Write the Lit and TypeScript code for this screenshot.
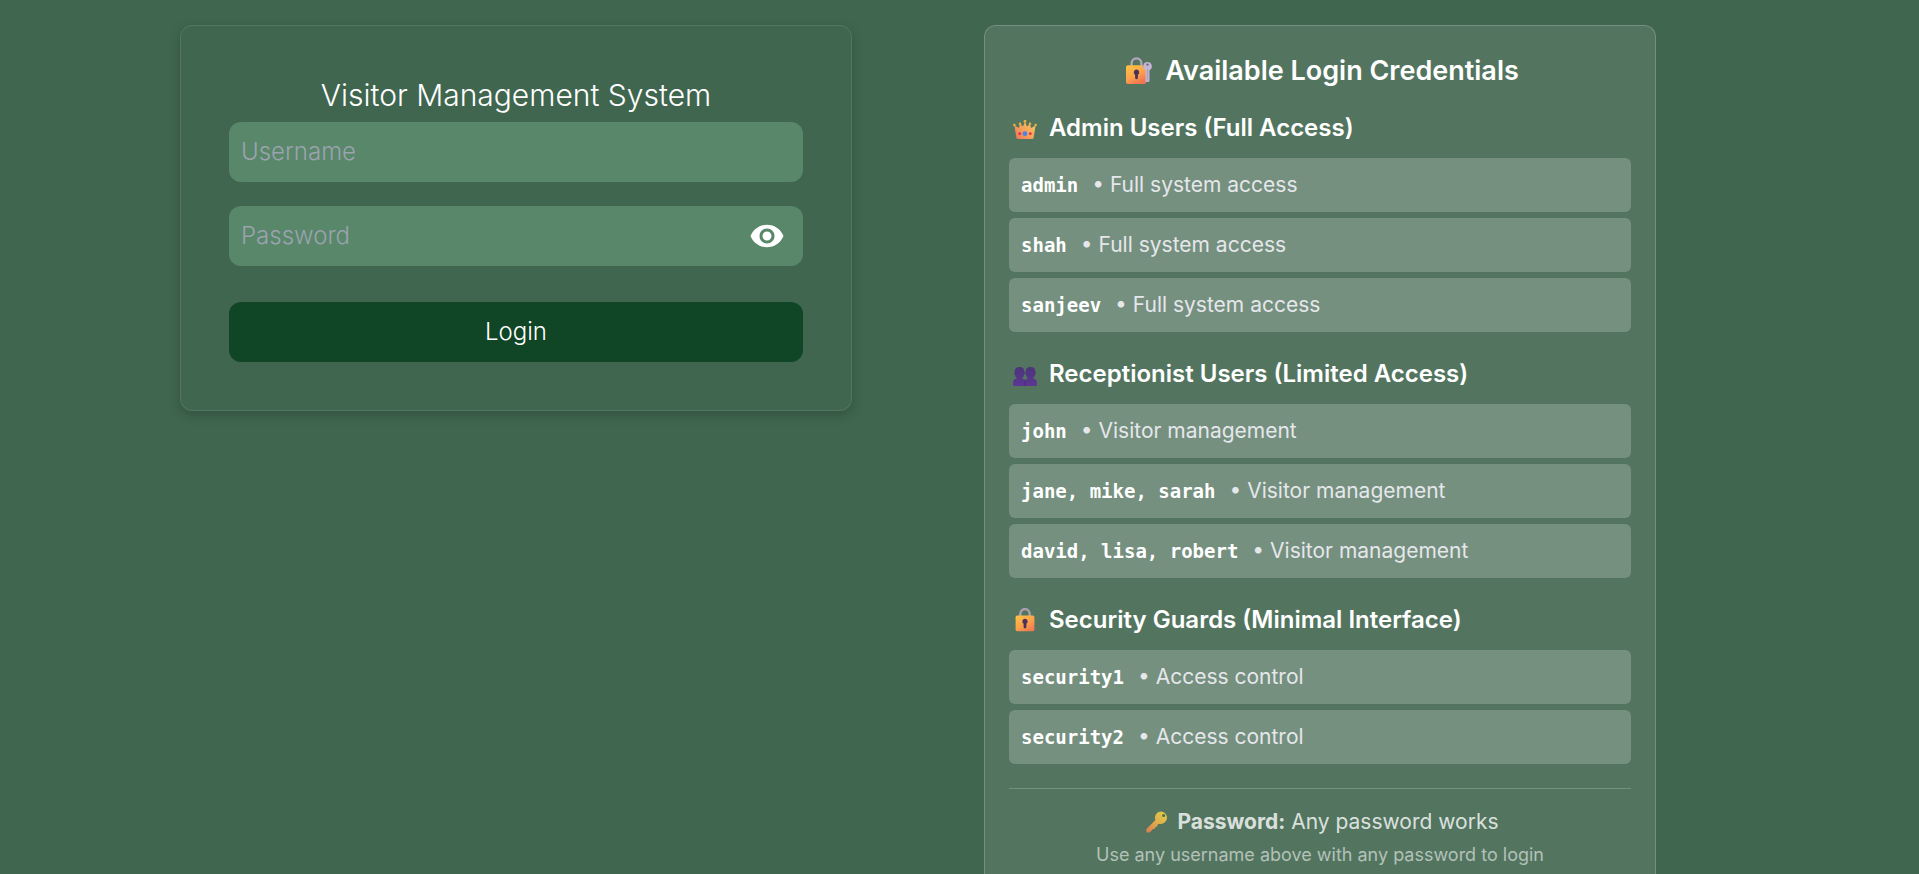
import { LitElement, html, css, svg } from "lit";
import { customElement, state } from "lit/decorators.js";

const padlock = svg`
  <defs>
    <linearGradient id="body" x1="0" y1="0" x2="0.7" y2="1">
      <stop offset="0" stop-color="#fdc546" />
      <stop offset="0.6" stop-color="#fba049" />
      <stop offset="1" stop-color="#f27c50" />
    </linearGradient>
  </defs>
  <path d="M7.3 9V5.800a4.700 4.700 0 0 1 9.400 0V9" fill="none" stroke="#a8a0ae" stroke-width="2.400" />
  <rect x="2.600" y="7.600" width="18.800" height="15.600" rx="1.600" fill="url(#body)" />
  <path d="M12 10.800a2.700 2.700 0 0 1 1.400 5v3.300a1.400 1.400 0 0 1-2.800 0v-3.300a2.700 2.700 0 0 1 1.400-5z" fill="#49325c" />
`;

const icons = {
  lockKey: html`<svg class="emoji large" viewBox="0 0 28 28" aria-hidden="true">
    <defs>
      <linearGradient id="lk" x1="0" y1="0" x2="0.6" y2="1">
        <stop offset="0" stop-color="#fdc744" />
        <stop offset="0.6" stop-color="#fba24a" />
        <stop offset="1" stop-color="#f07553" />
      </linearGradient>
    </defs>
    <path d="M6.6 10V6.2a4.9 4.9 0 0 1 9.8 0V10" fill="none" stroke="#b3a7bd" stroke-width="2.2" />
    <path d="M3 8.3h14.6c.3 2 1.4 3.3 3.6 4.1V25a2 2 0 0 1-2 2H3a2 2 0 0 1-2-2V10.300a2 2 0 0 1 2-2z" fill="url(#lk)" />
    <path d="M11.500 12.600a2.800 2.800 0 0 1 1.400 5.200v3a1.400 1.400 0 0 1-2.800 0v-3a2.800 2.800 0 0 1 1.400-5.200z" fill="#4b3158" />
    <path d="M22.500 5a4.400 4.400 0 0 1 2 8.300v10.200a1.600 1.600 0 0 1-1.600 1.600h-1.500a.9.900 0 0 1-.9-.9V13.300A4.400 4.400 0 0 1 22.500 5z" fill="#c4b6d2" />
    <circle cx="22.500" cy="7.600" r="1.100" fill="#66577a" />
    <path d="M22.600 12v11.500" stroke="#a695b8" stroke-width="0.8" />
  </svg>`,
  crown: html`<svg class="emoji" viewBox="0 0 24 24" aria-hidden="true">
    <defs>
      <linearGradient id="cr" x1="0" y1="1" x2="1" y2="0.2">
        <stop offset="0" stop-color="#e8735a" />
        <stop offset="0.5" stop-color="#f5a05c" />
        <stop offset="1" stop-color="#fcc35c" />
      </linearGradient>
    </defs>
    <path d="M1.400 9.500l4.600 2.500 1-4 3 2.600 2-5 2 5 3-2.600 1 4 4.600-2.500-2 12.300a1.500 1.500 0 0 1-1.500 1.200H4.900a1.500 1.500 0 0 1-1.500-1.200z" fill="url(#cr)" />
    <g fill="#f0b33c">
      <circle cx="1.400" cy="9" r="1.300" /><circle cx="7" cy="7.800" r="1.300" />
      <circle cx="12" cy="5.300" r="1.400" />
      <circle cx="17" cy="7.800" r="1.300" /><circle cx="22.600" cy="9" r="1.300" />
    </g>
    <circle cx="12" cy="17.700" r="2.400" fill="#4a83ea" />
    <circle cx="6.700" cy="17.700" r="1.400" fill="#e2304f" />
    <circle cx="17.300" cy="17.700" r="1.400" fill="#e2304f" />
  </svg>`,
  people: html`<svg class="emoji" viewBox="0 0 24 24" aria-hidden="true">
    <defs>
      <linearGradient id="pp" x1="0" y1="0" x2="0" y2="1">
        <stop offset="0" stop-color="#4b3578" />
        <stop offset="1" stop-color="#5c3794" />
      </linearGradient>
    </defs>
    <g fill="url(#pp)">
      <path d="M6.500 5c3.400 0 4.900 1.700 4.900 4.700.7.200.7 2.400-.2 2.700-.3 1.500-.9 2.600-1.900 3.400v.7c2 .4 3 1.700 3 3.700v2.900a.8.800 0 0 1-.8.800H.9a.8.800 0 0 1-.8-.8v-2.900c0-2 1.300-3.300 3.600-3.700v-.7c-1-.8-1.600-1.900-1.900-3.400-.9-.3-.9-2.500-.2-2.700C1.600 6.700 3.100 5 6.500 5z" />
      <path d="M17.500 5c3.400 0 4.900 1.700 4.900 4.700.7.200.7 2.400-.2 2.700-.3 1.500-.9 2.600-1.900 3.400v.7c2.300.4 3.600 1.700 3.600 3.700v2.900a.8.800 0 0 1-.8.800H12.500a.8.800 0 0 1-.8-.8v-2.900c0-2 1-3.300 3-3.700v-.7c-1-.8-1.600-1.900-1.900-3.400-.9-.3-.9-2.500-.2-2.700 0-3 1.500-4.700 4.900-4.700z" />
    </g>
    <path d="M12 18.500v5" stroke="#432a70" stroke-width="0.700" />
  </svg>`,
  lock: html`<svg class="emoji" viewBox="0 0 24 24" aria-hidden="true">${padlock}</svg>`,
  key: html`<svg class="emoji small" viewBox="0 0 22 22" aria-hidden="true">
    <defs>
      <linearGradient id="ky" x1="1" y1="0" x2="0" y2="1">
        <stop offset="0" stop-color="#e0cf4a" />
        <stop offset="0.5" stop-color="#e0ae4c" />
        <stop offset="1" stop-color="#dc7a52" />
      </linearGradient>
    </defs>
    <path d="M15.200.4a6.300 6.300 0 1 1-2.400 12.300l-1.300 1.100-.3 1.800-1.900.3-.4 1.900-1.800.3-3.300 3.100a1.500 1.500 0 0 1-1.300.4l-1.300-.2a.9.900 0 0 1-.8-.8l-.1-1.800a1.500 1.500 0 0 1 .4-1.100L9.400 9A6.300 6.300 0 0 1 15.200.4z" fill="url(#ky)" />
    <circle cx="17.600" cy="4.400" r="1.500" fill="#4f6b45" />
  </svg>`,
};

const groups = [
  {
    icon: icons.crown,
    title: "Admin Users (Full Access)",
    rows: [
      ["admin", "Full system access"],
      ["shah", "Full system access"],
      ["sanjeev", "Full system access"],
    ],
  },
  {
    icon: icons.people,
    title: "Receptionist Users (Limited Access)",
    rows: [
      ["john", "Visitor management"],
      ["jane, mike, sarah", "Visitor management"],
      ["david, lisa, robert", "Visitor management"],
    ],
  },
  {
    icon: icons.lock,
    title: "Security Guards (Minimal Interface)",
    rows: [
      ["security1", "Access control"],
      ["security2", "Access control"],
    ],
  },
];

@customElement("login-form")
export class LoginForm extends LitElement {
  @state() private visible = false;

  static styles = css`
    :host {
      display: block;
    }
    * {
      box-sizing: border-box;
    }
    .card {
      display: flex;
      flex-direction: column;
      padding: 48px;
      border: 1px solid rgba(255, 255, 255, 0.1);
      border-radius: 12px;
      box-shadow: 0 4px 12px rgba(0, 0, 0, 0.2);
    }
    h1 {
      margin: 0 0 6px;
      font-size: 30px;
      line-height: 42px;
      font-weight: 300;
      text-align: center;
    }
    .field {
      display: flex;
      align-items: center;
      height: 60px;
      margin-bottom: 24px;
      background: #58876a;
      border-radius: 12px;
    }
    input {
      flex: 1;
      min-width: 0;
      height: 100%;
      padding: 0 12px 2px;
      border: 0;
      border-radius: 12px;
      background: transparent;
      color: #fff;
      font: inherit;
    }
    input::placeholder {
      color: #9ca3af;
      opacity: 1;
    }
    .toggle {
      display: flex;
      margin-right: 18px;
      padding: 0;
      border: 0;
      background: none;
      color: #fff;
      cursor: pointer;
    }
    .toggle svg {
      width: 36px;
      height: 36px;
      fill: currentColor;
    }
    .submit {
      height: 60px;
      margin-top: 12px;
      border: 0;
      border-radius: 12px;
      background: #104526;
      color: #fff;
      font: inherit;
      cursor: pointer;
    }
  `;

  render() {
    return html`
      <form class="card" @submit=${(e: Event) => e.preventDefault()}>
        <h1>Visitor Management System</h1>
        <div class="field">
          <input type="text" aria-label="Username" placeholder="Username" />
        </div>
        <div class="field">
          <input type=${this.visible ? "text" : "password"} aria-label="Password" placeholder="Password" />
          <button class="toggle" type="button" aria-label="Show password"
            @click=${() => (this.visible = !this.visible)}>
            <svg viewBox="0 0 24 24" aria-hidden="true">
              <path d="M12 4.500C7 4.500 2.730 7.610 1 12c1.730 4.390 6 7.500 11 7.500s9.270-3.110 11-7.500c-1.730-4.390-6-7.500-11-7.500zM12 17c-2.760 0-5-2.240-5-5s2.240-5 5-5 5 2.240 5 5-2.240 5-5 5zm0-8c-1.660 0-3 1.340-3 3s1.340 3 3 3 3-1.340 3-3-1.340-3-3-3z" />
            </svg>
          </button>
        </div>
        <button class="submit" type="submit">Login</button>
      </form>
    `;
  }
}

@customElement("credential-list")
export class CredentialList extends LitElement {
  static styles = css`
    :host {
      display: block;
    }
    .card {
      padding: 24px;
      border: 1px solid rgba(255, 255, 255, 0.2);
      border-radius: 12px;
      background: rgba(255, 255, 255, 0.1);
      font-weight: 400;
    }
    h2,
    h3,
    p,
    ul {
      margin: 0;
      padding: 0;
    }
    h2,
    h3,
    .password {
      display: flex;
      align-items: center;
    }
    h2 {
      justify-content: center;
      margin-bottom: 18px;
      font-size: 27px;
      line-height: 42px;
      font-weight: 600;
    }
    h3 {
      margin-bottom: 12px;
      font-size: 24px;
      line-height: 36px;
      font-weight: 600;
    }
    .emoji {
      flex: none;
      width: 24px;
      height: 24px;
      margin: 0 12px 0 4px;
    }
    .large {
      width: 28px;
      height: 28px;
    }
    .small {
      width: 22px;
      height: 22px;
      margin-right: 10px;
    }
    .group {
      margin-bottom: 24px;
    }
    ul {
      display: grid;
      gap: 6px;
      list-style: none;
    }
    li {
      padding: 12px;
      border-radius: 6px;
      background: rgba(255, 255, 255, 0.2);
      font-size: 21px;
      line-height: 30px;
      color: #e5e7eb;
    }
    code {
      margin-right: 14px;
      font-family: "DejaVu Sans Mono", "Liberation Mono", monospace;
      font-size: 19px;
      line-height: 24px;
      font-weight: 700;
      color: #fff;
    }
    .note {
      padding-top: 18px;
      border-top: 1px solid rgba(255, 255, 255, 0.2);
      text-align: center;
    }
    .password {
      justify-content: center;
      margin-bottom: 6px;
      font-size: 21px;
      line-height: 30px;
      color: rgba(255, 255, 255, 0.8);
    }
    .hint {
      font-size: 18px;
      line-height: 24px;
      color: rgba(255, 255, 255, 0.56);
    }
  `;

  render() {
    return html`
      <section class="card">
        <h2>${icons.lockKey}Available Login Credentials</h2>
        ${groups.map(
          (group) => html`
            <div class="group">
              <h3>${group.icon}${group.title}</h3>
              <ul>
                ${group.rows.map(([name, access]) => html`<li><code>${name}</code>• ${access}</li>`)}
              </ul>
            </div>
          `
        )}
        <div class="note">
          <div class="password">
            ${icons.key}
            <p><strong>Password:</strong> Any password works</p>
          </div>
          <p class="hint">Use any username above with any password to login</p>
        </div>
      </section>
    `;
  }
}

@customElement("app-root")
export class AppRoot extends LitElement {
  static styles = css`
    :host {
      display: block;
      height: 100vh;
      overflow-y: auto;
      scrollbar-width: none;
      background: #40664f;
      color: #fff;
      font-family: Inter, "Liberation Sans", sans-serif;
      font-size: 24px;
      line-height: 36px;
      font-weight: 300;
    }
    .page {
      display: grid;
      grid-template-columns: 180fr minmax(0, 672px) 132fr minmax(0, 672px) 263fr;
      align-items: start;
      padding: 25px 0;
    }
    login-form {
      grid-column: 2;
    }
    credential-list {
      grid-column: 4;
    }
  `;

  render() {
    return html`
      <main class="page">
        <login-form></login-form>
        <credential-list></credential-list>
      </main>
    `;
  }
}
